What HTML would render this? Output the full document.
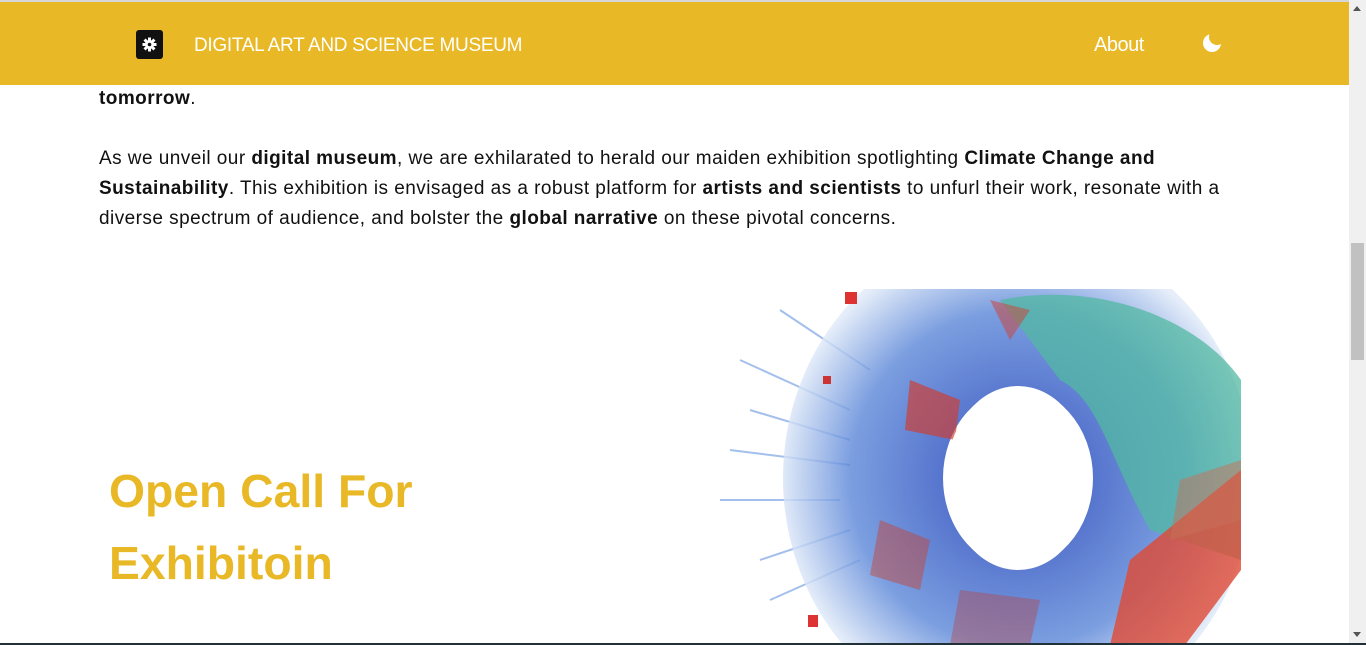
<!DOCTYPE html>
<html><head><meta charset="utf-8"><style>
html,body{margin:0;padding:0;width:1366px;height:645px;overflow:hidden;background:#fff;font-family:"Liberation Sans",sans-serif;}
.top{position:absolute;left:0;top:0;width:1349px;height:2px;background:#d6d6d6}
header{position:absolute;left:0;top:2px;width:1349px;height:83px;background:#E9B826;}
.logo{position:absolute;left:136px;top:28px;width:27px;height:29px;background:#111;border-radius:3px}
.title{position:absolute;left:194px;top:33px;color:#fff;font-size:19px;letter-spacing:-0.3px}
.about{position:absolute;left:1094px;top:32px;color:#fff;font-size:20px;letter-spacing:-0.5px}
.moon{position:absolute;left:1201px;top:30px}
.txt{position:absolute;left:99px;width:1130px;font-size:19px;letter-spacing:0.45px;line-height:30px;color:#111}
.h{position:absolute;left:109px;top:455px;color:#E9B826;font-size:46.3px;font-weight:bold;line-height:72px}
.sb{position:absolute;left:1349px;top:0;width:17px;height:645px;background:#f0f0f0}
.thumb{position:absolute;left:1351px;top:243px;width:13px;height:117px;background:#c1c1c1}
.bot{position:absolute;left:0;top:643px;width:1366px;height:2px;background:#223038}
</style></head><body>
<div class="txt" style="top:84px"><b>tomorrow</b>.</div>
<div class="txt" style="top:144px">As we unveil our <b>digital museum</b>, we are exhilarated to herald our maiden exhibition spotlighting <b>Climate Change and Sustainability</b>. This exhibition is envisaged as a robust platform for <b>artists and scientists</b> to unfurl their work, resonate with a diverse spectrum of audience, and bolster the <b>global narrative</b> on these pivotal concerns.</div>
<div class="h">Open Call For<br>Exhibitoin</div>
<svg style="position:absolute;left:690px;top:289px" width="551" height="356" viewBox="690 289 551 356">
<defs><clipPath id="c"><rect x="690" y="289" width="551" height="356"/></clipPath>
<radialGradient id="g" cx="1018" cy="478" r="240" gradientUnits="userSpaceOnUse"><stop offset=".3" stop-color="#2a50c0"/><stop offset=".7" stop-color="#5a86d8"/><stop offset="1" stop-color="#e0eaf8"/></radialGradient></defs>
<g clip-path="url(#c)">
<g stroke="#4a80d8" stroke-width="2" opacity=".5">
<line x1="740" y1="360" x2="850" y2="410"/><line x1="730" y1="450" x2="850" y2="465"/><line x1="760" y1="560" x2="850" y2="530"/><line x1="780" y1="310" x2="870" y2="370"/><line x1="720" y1="500" x2="840" y2="500"/><line x1="750" y1="410" x2="850" y2="440"/><line x1="770" y1="600" x2="860" y2="560"/></g>
<ellipse cx="1018" cy="478" rx="155" ry="170" fill="none" stroke="url(#g)" stroke-width="160" opacity=".8"/>
<path d="M1000 300 C1100 280 1200 320 1241 380 L1241 560 L1150 530 C1110 460 1100 400 1060 380 Z" fill="#52b8a2" opacity=".75"/>
<path d="M1241 470 L1241 570 L1185 645 L1110 645 L1130 560 Z" fill="#e04a35" opacity=".8"/>
<path d="M1180 480 L1241 460 L1241 520 L1170 540 Z" fill="#c8705a" opacity=".5"/>
<path d="M910 380 L960 400 L955 440 L905 430 Z" fill="#d33a2c" opacity=".65"/>
<path d="M880 520 L930 540 L920 590 L870 575 Z" fill="#c8402f" opacity=".45"/>
<path d="M960 590 L1040 600 L1030 645 L950 645 Z" fill="#b84040" opacity=".4"/>
<path d="M990 300 L1030 310 L1010 340 Z" fill="#d04030" opacity=".5"/>
<ellipse cx="1018" cy="478" rx="72" ry="92" fill="#fff"/>
<rect x="845" y="292" width="12" height="12" fill="#d33" /><rect x="823" y="376" width="8" height="8" fill="#c33"/><rect x="808" y="615" width="10" height="12" fill="#d33"/>
</g></svg>
<div class="top"></div>
<header>
<div class="logo"><svg width="27" height="29" viewBox="0 0 27 29"><g fill="#fff" transform="translate(13.5 14.5)"><circle r="4.5"/><g id="t"><rect x="-1.5" y="-7" width="3" height="14"/></g><use href="#t" transform="rotate(45)"/><use href="#t" transform="rotate(90)"/><use href="#t" transform="rotate(135)"/></g><circle cx="13.5" cy="14.5" r="1.8" fill="#111"/></svg></div>
<div class="title">DIGITAL ART AND SCIENCE MUSEUM</div>
<div class="about">About</div>
<svg class="moon" width="24" height="24" viewBox="0 0 24 24"><defs><mask id="m"><rect width="24" height="24" fill="#fff"/><circle cx="16" cy="5" r="8" fill="#000"/></mask></defs><circle cx="11" cy="11" r="9" fill="#fff" mask="url(#m)"/></svg>
</header>
<div class="sb"></div><div class="thumb"></div>
<div style="position:absolute;left:1353px;top:6px;width:0;height:0;border-left:4px solid transparent;border-right:4px solid transparent;border-bottom:5px solid #555"></div>
<div style="position:absolute;left:1353px;top:632px;width:0;height:0;border-left:4px solid transparent;border-right:4px solid transparent;border-top:5px solid #555"></div>
<div class="bot"></div>
</body></html>
